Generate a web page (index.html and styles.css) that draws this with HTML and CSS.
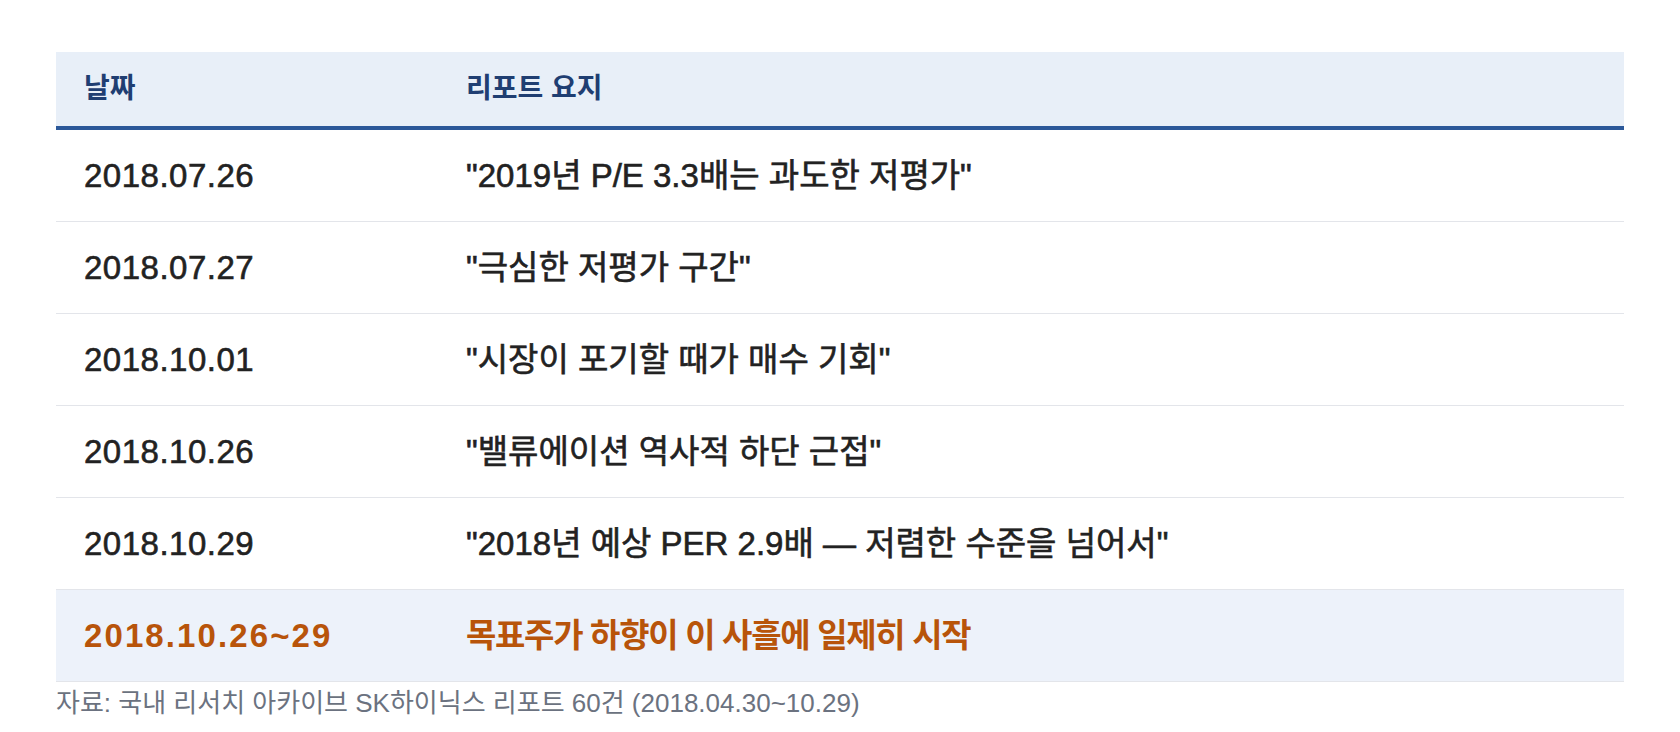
FILE: index.html
```html
<!DOCTYPE html>
<html lang="ko">
<head>
<meta charset="utf-8">
<title>SK하이닉스 리포트 요지</title>
<link rel="stylesheet" href="styles.css">
</head>
<body>
<div class="wrap">
  <table class="report">
    <thead>
      <tr><th class="c-date">날짜</th><th>리포트 요지</th></tr>
    </thead>
    <tbody>
      <tr><td class="c-date">2018.07.26</td><td>"2019년 P/E 3.3배는 과도한 저평가"</td></tr>
      <tr><td class="c-date">2018.07.27</td><td>"극심한 저평가 구간"</td></tr>
      <tr><td class="c-date">2018.10.01</td><td>"시장이 포기할 때가 매수 기회"</td></tr>
      <tr><td class="c-date">2018.10.26</td><td>"밸류에이션 역사적 하단 근접"</td></tr>
      <tr><td class="c-date">2018.10.29</td><td>"2018년 예상 PER 2.9배 — 저렴한 수준을 넘어서"</td></tr>
      <tr class="hl"><td class="c-date">2018.10.26~29</td><td class="hl-text">목표주가 하향이 이 사흘에 일제히 시작</td></tr>
    </tbody>
  </table>
  <p class="source">자료: 국내 리서치 아카이브 SK하이닉스 리포트 60건 (2018.04.30~10.29)</p>
</div>
</body>
</html>
```
FILE: styles.css
```css
html, body {
  margin: 0;
  padding: 0;
  background: #ffffff;
}
body {
  font-family: "Liberation Sans", "Noto Sans CJK KR", sans-serif;
  color: #222222;
}
.wrap {
  padding: 52px 56px 0;
}
.report {
  width: 100%;
  border-collapse: collapse;
  table-layout: fixed;
}
.report th {
  background: #e8eff8;
  color: #1f3e72;
  font-size: 28px;
  font-weight: 700;
  text-align: left;
  line-height: 46px;
  padding: 14px 28px;
  border-bottom: 4px solid #2b5899;
}
.report .c-date {
  width: 326px;
}
.report td {
  font-size: 33px;
  font-weight: 400;
  line-height: 49px;
  padding: 21px 28px;
  border-bottom: 1px solid #e3e5ea;
  color: #222222;
  -webkit-text-stroke: 0.6px #222222;
}
.report td.c-date {
  letter-spacing: 0.5px;
}
.report tr.hl td {
  background: #edf2fa;
  color: #b8540a;
  font-weight: 700;
  -webkit-text-stroke: 0;
}
.report tr.hl td.c-date {
  letter-spacing: 2.1px;
}
.report tr.hl td.hl-text {
  letter-spacing: -1.3px;
}
.source {
  margin: 4px 0 0;
  font-size: 26px;
  line-height: 34px;
  color: #6b7280;
}
```
